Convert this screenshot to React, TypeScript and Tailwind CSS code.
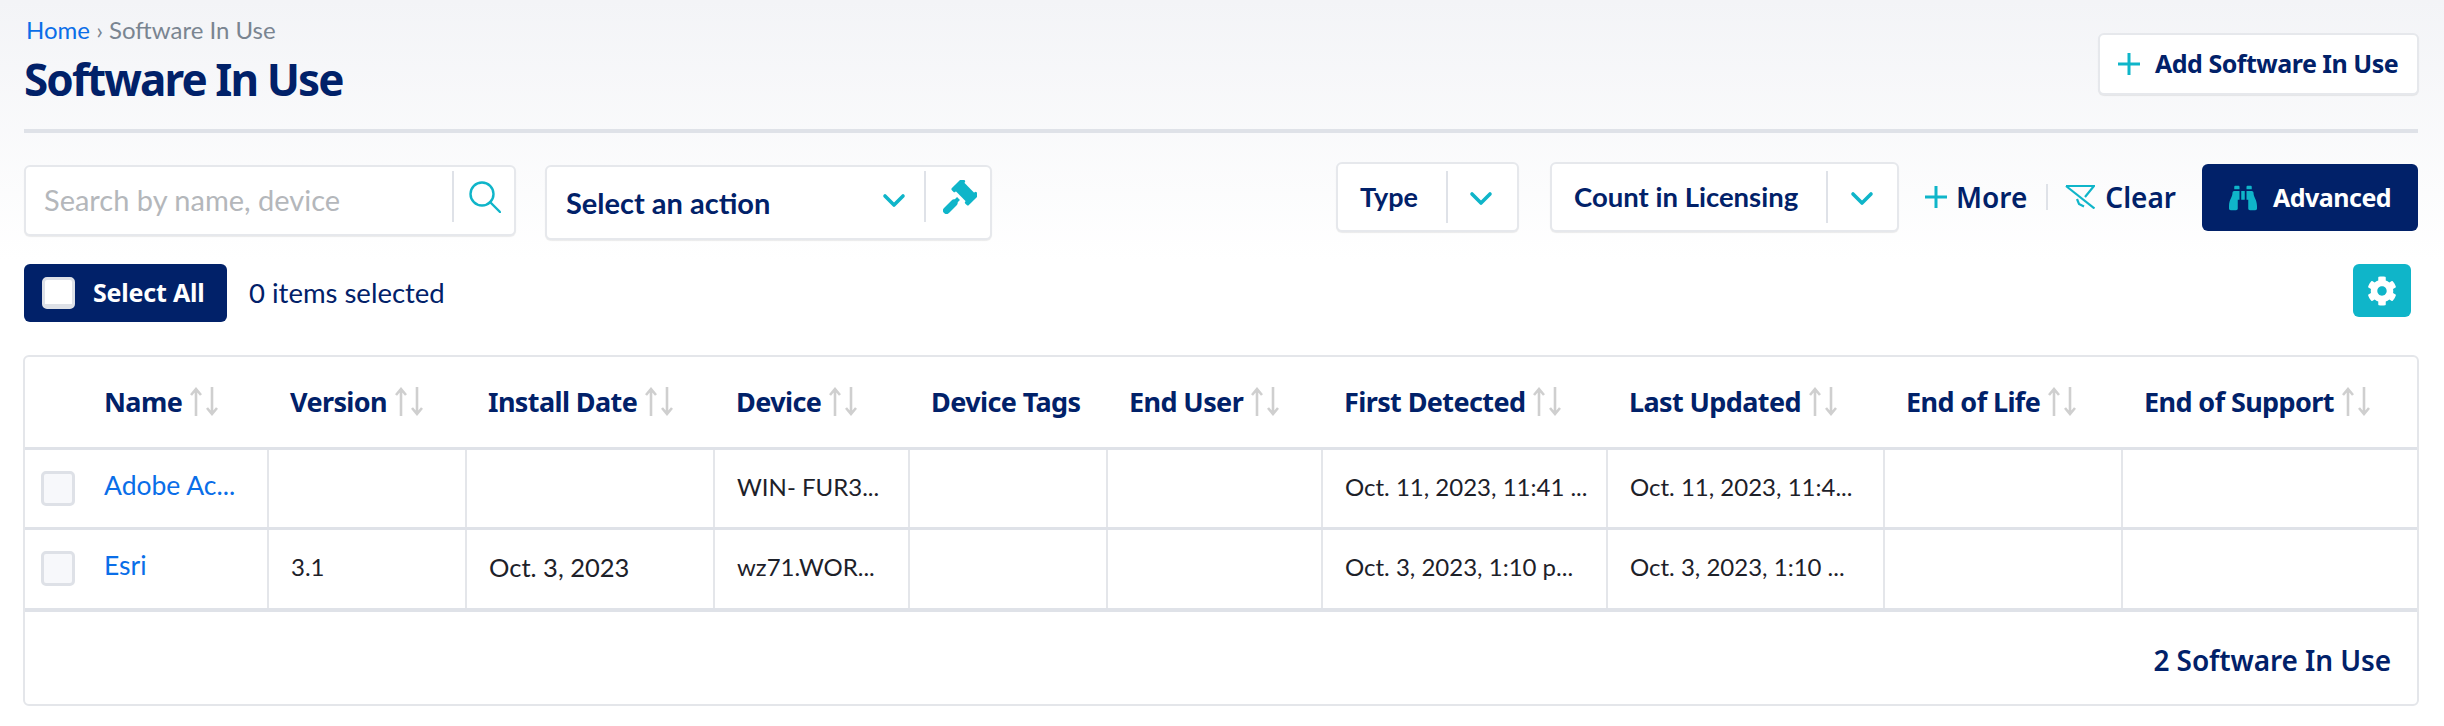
import React from "react";
import { FaBinoculars, FaCog } from "react-icons/fa";

const head = { fontFamily: '"Noto Sans", sans-serif' };
const body = { fontFamily: 'Lato, sans-serif' };

function Chevron({ className = "" }: { className?: string }) {
  return (
    <svg width="24" height="16" viewBox="0 0 24 16" fill="none" className={className}>
      <path d="M3 3l9 9 9-9" stroke="#0fb5c9" strokeWidth="3.6" strokeLinecap="round" strokeLinejoin="round" />
    </svg>
  );
}

function Sort() {
  return (
    <svg width="28" height="29" viewBox="0 0 28 29" fill="none" className="ml-2 shrink-0">
      <path d="M6 29V2M1 8l5-6 5 6" stroke="#cfcfcf" strokeWidth="2.6" />
      <path d="M22 0v27M17 21l5 6 5-6" stroke="#cfcfcf" strokeWidth="2.6" />
    </svg>
  );
}

function Plus() {
  return (
    <svg width="24" height="24" viewBox="0 0 24 24" fill="none">
      <path d="M12 1v22M1 12h22" stroke="#0fb5c9" strokeWidth="3" />
    </svg>
  );
}

function Gavel() {
  return (
    <svg width="34" height="34" viewBox="0 0 34 34" fill="#0fb5c9">
      <g transform="translate(22 12) rotate(45)">
        <rect x="-12" y="-8" width="5" height="16" rx="1.500" />
        <rect x="7" y="-8" width="5" height="16" rx="1.500" />
        <rect x="-8" y="-6" width="16" height="12" />
      </g>
      <path d="M3.500 30.500L11 23" stroke="#0fb5c9" strokeWidth="7" strokeLinecap="round" />
      <path d="M11 23l4.500-4.500" stroke="#0fb5c9" strokeWidth="4" />
    </svg>
  );
}

function ClearIcon() {
  return (
    <svg width="30" height="24" viewBox="0 0 30 24" fill="none" stroke="#0fb5c9" strokeWidth="2.2">
      <path d="M1 1h28L20 12" />
      <path d="M1 1l28.500 22.500" />
      <path d="M12 14l2 5 5 2.500" />
    </svg>
  );
}

const cols = [
  { w: 243, t: "Name", s: true },
  { w: 198, t: "Version", s: true },
  { w: 248, t: "Install Date", s: true },
  { w: 195, t: "Device", s: true },
  { w: 198, t: "Device Tags", s: false },
  { w: 215, t: "End User", s: true },
  { w: 285, t: "First Detected", s: true },
  { w: 277, t: "Last Updated", s: true },
  { w: 238, t: "End of Life", s: true },
  { w: 295, t: "End of Support", s: true },
];

const rows = [
  ["Adobe Ac...", "", "", "WIN- FUR3...", "", "", "Oct. 11, 2023, 11:41 ...", "Oct. 11, 2023, 11:4...", "", ""],
  ["Esri", "3.1", "Oct. 3, 2023", "wz71.WOR...", "", "", "Oct. 3, 2023, 1:10 p...", "Oct. 3, 2023, 1:10 ...", "", ""],
];

const box = "bg-white rounded-[6px] border-2 border-[#e6e8ec] shadow-[0_1px_1px_rgba(0,0,0,0.08)]";

function Check() {
  return <span className="block shrink-0 w-[34px] h-[35px] rounded-[5px] border-[3px] border-[#dee1e7] bg-[#f7f8fb]" />;
}

export default function App() {
  return (
    <div style={body} className="w-[2444px] h-[726px] overflow-hidden bg-white text-[#012169]">
      <div className="h-[260px] bg-gradient-to-b from-[#f3f4f7] to-white pl-6 pr-[26px] pt-[18px]">
        <div className="flex justify-between">
          <div>
            <div className="text-[24px] leading-6 pl-[2px] text-[#7a8591]">
              <span className="text-[#0a6ee8]">Home</span> › Software In Use
            </div>
            <h1 style={head} className="mt-[11px] text-[44px] leading-[52px] font-bold tracking-[-1.9px]">Software In Use</h1>
          </div>
          <button style={head} className={"mt-[15px] -mr-px w-[321px] h-[62px] flex items-center pl-[17px] gap-[14px] text-[25px] font-bold tracking-[-0.5px] " + box}>
            <Plus />Add Software In Use
          </button>
        </div>
        <div className="mt-6 h-1 bg-[#dfe2e8]" />
      </div>
      <div className="relative -mt-[127px] pl-6 pr-[26px]">
        <div className="flex items-start">
          <div className={"mt-8 w-[492px] h-[71px] flex items-start " + box}>
            <input readOnly placeholder="Search by name, device" className="w-[426px] h-[64px] pl-[18px] bg-transparent text-[29px] placeholder:text-[#b4b7bb] outline-none" />
            <span className="mt-1 w-0.5 h-[51px] bg-[#dfe2e8]" />
            <svg width="32" height="32" viewBox="0 0 32 32" fill="none" stroke="#0fb5c9" strokeWidth="2.4" className="ml-[15px] mt-[14px]">
              <circle cx="13" cy="13" r="11.500" />
              <path d="M21 21l10 10" strokeLinecap="round" />
            </svg>
          </div>
          <div className={"mt-8 ml-[29px] w-[447px] h-[75px] flex items-start " + box}>
            <span className="ml-[19px] mt-[19px] w-[300px] text-[29px] leading-[34px] font-bold whitespace-nowrap">Select an action</span>
            <Chevron className="mt-[26px] ml-4" />
            <span className="ml-[18px] mt-1 w-0.5 h-[51px] bg-[#dfe2e8]" />
            <span className="ml-[17px] mt-[13px]"><Gavel /></span>
          </div>
          <div className="flex-1" />
          <div className={"mt-[29px] w-[183px] h-[70px] flex items-center " + box}>
            <span className="ml-[22px] w-[86px] text-[27px] font-bold">Type</span>
            <span className="w-0.5 h-[52px] bg-[#dfe2e8]" />
            <Chevron className="ml-[21px] mt-1" />
          </div>
          <div className={"mt-[29px] ml-[31px] w-[349px] h-[70px] flex items-center " + box}>
            <span className="ml-[22px] w-[252px] text-[27.5px] font-bold whitespace-nowrap">Count in Licensing</span>
            <span className="w-0.5 h-[52px] bg-[#dfe2e8]" />
            <Chevron className="ml-[22px] mt-1" />
          </div>
          <div style={head} className="mt-[30px] h-[68px] ml-[25px] flex items-center text-[28px] font-semibold">
            <Plus />
            <span className="ml-2">More</span>
            <span className="ml-[19px] w-0.5 h-[26px] bg-[#dfe2e8]" />
            <span className="ml-[17px]"><ClearIcon /></span>
            <span className="ml-[10px]">Clear</span>
          </div>
          <button style={head} className="mt-[31px] ml-[26px] w-[216px] h-[67px] flex items-center justify-center gap-[16px] rounded-[6px] bg-[#012169] text-white text-[25px] font-bold tracking-[-0.5px]">
            <FaBinoculars className="text-[#0fb5c9] text-[28px]" />Advanced
          </button>
        </div>
        <div className="mt-[24px] flex items-start">
          <button style={head} className="w-[203px] h-[58px] flex items-center pl-[18px] rounded-[6px] bg-[#012169] text-white text-[25px] font-bold tracking-[-0.2px] whitespace-nowrap">
            <span className="block w-[33px] h-[32px] rounded-[5px] border-[3px] border-b-[5px] border-[#dee1e7] bg-white mr-[18px]" />Select All
          </button>
          <span className="ml-[22px] mt-[15px] text-[27.5px] leading-7">0 items selected</span>
          <div className="flex-1" />
          <button className="mr-[7px] w-[58px] h-[53px] rounded-[6px] bg-[#0fb5c9] flex items-center justify-center">
            <FaCog className="text-white text-[30px]" />
          </button>
        </div>
        <div className="mt-[33px] -ml-px h-[351px] w-[2396px] rounded-[6px] border-2 border-[#e4e6ea] bg-white">
          <table className="table-fixed border-collapse w-[2392px]">
            <colgroup>
              {cols.map((c) => <col key={c.t} style={{ width: c.w }} />)}
            </colgroup>
            <thead>
              <tr className="h-[91px] border-b-[3px] border-[#dfe2e8]">
                {cols.map((c, i) => (
                  <th key={c.t} style={head} className={"p-0 text-left text-[27px] font-bold tracking-[-0.6px] " + (i === 0 ? "pl-[79px]" : "pl-[22px]")}>
                    <span className="flex items-center whitespace-nowrap">{c.t}{c.s && <Sort />}</span>
                  </th>
                ))}
              </tr>
            </thead>
            <tbody>
              {rows.map((r, ri) => (
                <tr key={ri} className={ri === 0 ? "h-[80px] border-b-[3px] border-[#dfe2e8]" : "h-[82px] border-b-4 border-[#dfe2e8]"}>
                  {r.map((v, i) => (
                    <td key={i} className={"p-0 text-[#1d2129] whitespace-nowrap " + (i === 0 ? "" : "pb-[3px] pl-[22px] border-l-2 border-[#e4e6ea] ") + (i === 2 ? "text-[25.5px]" : "text-[24px]")}>
                      {i === 0 ? (
                        <span className="flex items-center pl-[16px] gap-[29px] text-[26.5px] text-[#0a6ee8]"><Check /><span className="mb-[5px]">{v}</span></span>
                      ) : v}
                    </td>
                  ))}
                </tr>
              ))}
            </tbody>
          </table>
          <div style={head} className="mt-8 pr-[26px] text-right text-[28px] leading-8 font-semibold tracking-[-0.1px]">2 Software In Use</div>
        </div>
      </div>
    </div>
  );
}
